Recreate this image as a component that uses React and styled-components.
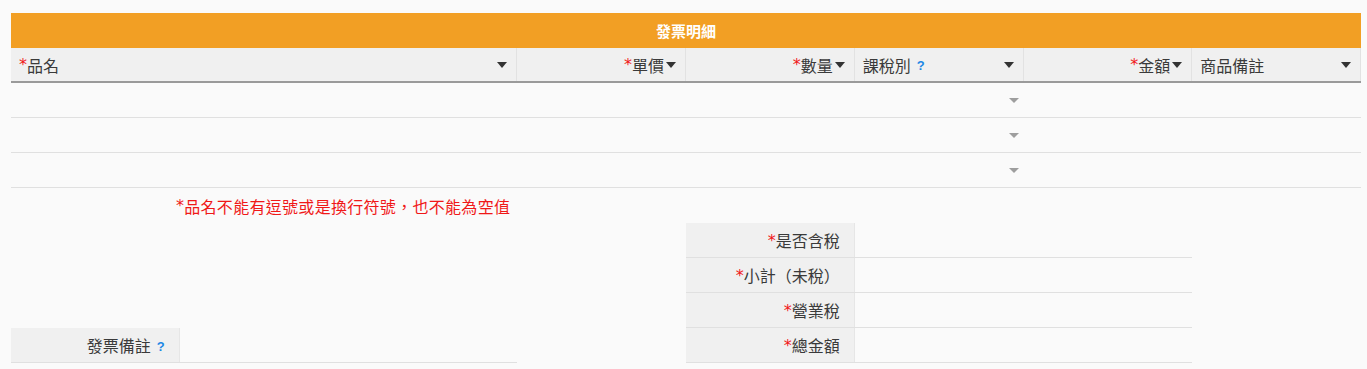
import React from "react";
import styled, { createGlobalStyle } from "styled-components";

const GlobalStyle = createGlobalStyle`
  html, body { margin: 0; padding: 0; background: #fafafa; }
  body {
    font-family: "Noto Sans CJK TC", "Noto Sans", "Liberation Sans", sans-serif;
    color: #333;
  }
`;

const Page = styled.div`
  width: 1350px;
  padding: 13px 6px 0 11px;
`;

const TitleBar = styled.div`
  height: 35px;
  background: #f29f24;
  color: #fff;
  font-size: 15px;
  font-weight: 700;
  display: flex;
  align-items: center;
  justify-content: center;
`;

const GridRow = styled.div`
  display: grid;
  grid-template-columns: repeat(8, 1fr);
  box-sizing: border-box;
  height: 35px;
  border-bottom: ${(p) => (p.$head ? "2px solid #9a9a9a" : "1px solid #e0e0e0")};
  background: ${(p) => (p.$head ? "#f0f0f0" : "transparent")};
`;

const HeadCell = styled.div`
  grid-column: span ${(p) => p.$span || 1};
  box-sizing: border-box;
  border-right: 1px solid #e2e2e2;
  padding: 0 9px 0 8px;
  display: flex;
  align-items: center;
  justify-content: ${(p) => (p.$right ? "flex-end" : "space-between")};
  font-size: 16px;
  color: #3a3a3a;
  white-space: nowrap;
`;

const BodyCell = styled.div`
  grid-column: span ${(p) => p.$span || 1};
  display: flex;
  align-items: center;
  justify-content: flex-end;
  padding-right: 5px;
`;

const Star = styled.span`
  font-family: "DejaVu Sans", sans-serif;
  color: #f01818;
`;

const Caret = styled.span`
  display: inline-block;
  width: 0;
  height: 0;
  border-left: ${(p) => (p.$small ? 5 : 5.5)}px solid transparent;
  border-right: ${(p) => (p.$small ? 5 : 5.5)}px solid transparent;
  border-top: ${(p) => (p.$small ? 5 : 6)}px solid ${(p) => (p.$small ? "#9e9e9e" : "#333")};
  margin-left: ${(p) => (p.$tight ? 2 : 0)}px;
`;

const Help = styled.span`
  font-family: "Liberation Sans", sans-serif;
  font-size: 13px;
  font-weight: 700;
  color: #1e88e5;
  margin-left: 6px;
  margin-top: 2px;
`;

const Label = styled.span`
  display: inline-flex;
  align-items: center;
`;

const Lower = styled.div`
  display: grid;
  grid-template-columns: repeat(8, 1fr);
  grid-template-rows: repeat(5, 35px);
`;

const ErrorMsg = styled.div`
  grid-column: 1 / span 3;
  grid-row: 1;
  display: flex;
  align-items: center;
  justify-content: flex-end;
  padding-right: 7px;
  color: #f01818;
  font-size: 16px;
  letter-spacing: 0.3px;
  white-space: nowrap;
`;

const FieldRow = styled.div`
  grid-column: ${(p) => p.$col} / span 3;
  grid-row: ${(p) => p.$row};
  display: grid;
  grid-template-columns: 1fr 2fr;
  box-sizing: border-box;
  border-bottom: 1px solid #e0e0e0;
`;

const FieldLabel = styled.div`
  background: #f0f0f0;
  border-right: 1px solid #e6e6e6;
  display: flex;
  align-items: center;
  justify-content: flex-end;
  padding-right: 14px;
  font-size: 16px;
  color: #3a3a3a;
  white-space: nowrap;
`;

const FieldValue = styled.div``;

const columns = [
  { name: "品名", req: true, span: 3 },
  { name: "單價", req: true, right: true },
  { name: "數量", req: true, right: true },
  { name: "課稅別", help: true },
  { name: "金額", req: true, right: true },
  { name: "商品備註" },
];

const summary = ["是否含稅", "小計（未稅）", "營業稅", "總金額"];

export default function App() {
  return (
    <>
      <GlobalStyle />
      <Page>
        <TitleBar>發票明細</TitleBar>
        <GridRow $head>
          {columns.map((c) => (
            <HeadCell key={c.name} $span={c.span} $right={c.right}>
              <Label>
                {c.req && <Star>*</Star>}
                {c.name}
                {c.help && <Help>?</Help>}
              </Label>
              <Caret $tight={c.right} />
            </HeadCell>
          ))}
        </GridRow>
        {[0, 1, 2].map((r) => (
          <GridRow key={r}>
            <BodyCell $span={5} />
            <BodyCell>
              <Caret $small />
            </BodyCell>
            <BodyCell $span={2} />
          </GridRow>
        ))}
        <Lower>
          <ErrorMsg>
            <Star>*</Star>品名不能有逗號或是換行符號，也不能為空值
          </ErrorMsg>
          {summary.map((s, i) => (
            <FieldRow key={s} $col={5} $row={i + 2}>
              <FieldLabel>
                <Star>*</Star>
                {s}
              </FieldLabel>
              <FieldValue />
            </FieldRow>
          ))}
          <FieldRow $col={1} $row={5}>
            <FieldLabel>
              發票備註<Help>?</Help>
            </FieldLabel>
            <FieldValue />
          </FieldRow>
        </Lower>
      </Page>
    </>
  );
}
